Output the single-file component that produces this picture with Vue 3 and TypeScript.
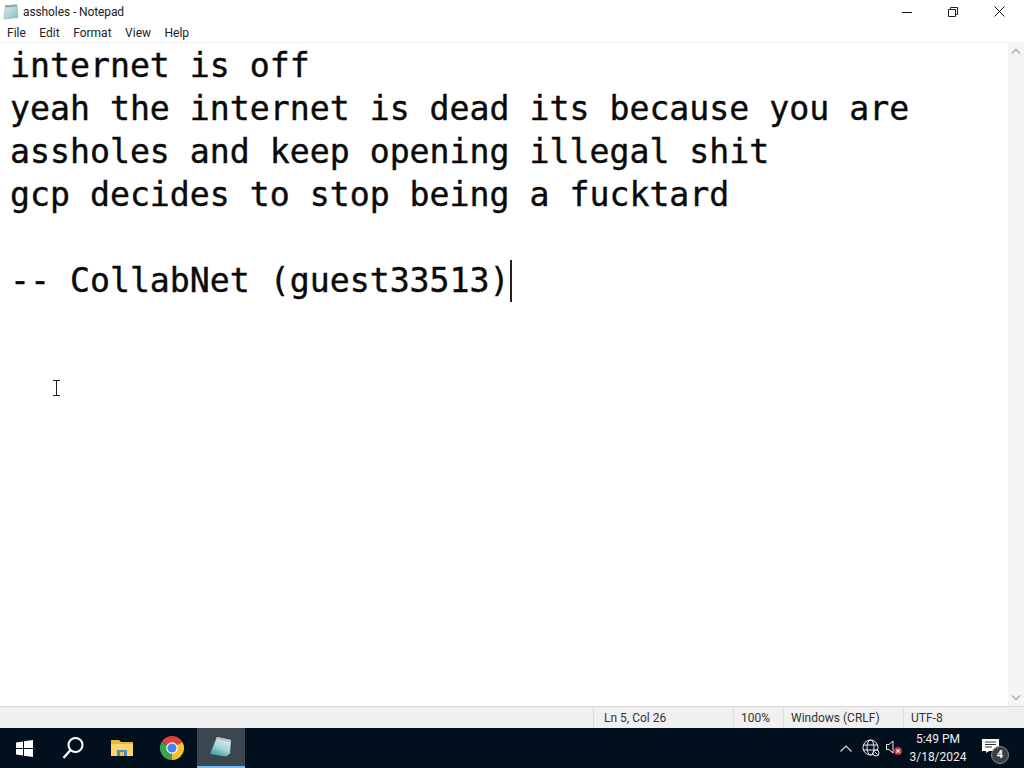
<script setup lang="ts">
const menus = ['File', 'Edit', 'Format', 'View', 'Help'];
const lines = [
  'internet is off',
  'yeah the internet is dead its because you are',
  'assholes and keep opening illegal shit',
  'gcp decides to stop being a fucktard',
  '',
];
const lastLine = '-- CollabNet (guest33513)';
</script>

<template>
  <div class="window">
    <header class="titlebar">
      <svg class="app-icon" width="16" height="16" viewBox="0 0 16 16">
        <defs>
          <linearGradient id="padSmall" x1="0" y1="0" x2="1" y2="1">
            <stop offset="0" stop-color="#d8eeee" />
            <stop offset="1" stop-color="#7fbfc2" />
          </linearGradient>
        </defs>
        <path d="M2.500 3 14 2l1 11.500-14 1.500z" fill="url(#padSmall)" stroke="#8fa8ac" stroke-width=".6" />
        <path d="M3 3V1M5 3V1M7 2.800V.8M9 2.700V.7M11 2.500V.5M13 2.300V.3" stroke="#555" stroke-width="1" />
      </svg>
      <span class="title">assholes - Notepad</span>
      <div class="controls">
        <span class="ctl">
          <svg width="10" height="10" viewBox="0 0 10 10"><path d="M0 5.500h10" stroke="#111" /></svg>
        </span>
        <span class="ctl">
          <svg width="10" height="10" viewBox="0 0 10 10" fill="none" stroke="#222">
            <path d="M.5 2.500h7v7h-7zM2.500 2.500V.5h7v7h-2" />
          </svg>
        </span>
        <span class="ctl">
          <svg width="11" height="11" viewBox="0 0 11 11" fill="none" stroke="#111"><path d="M.5.500l10 10M10.500.500l-10 10" /></svg>
        </span>
      </div>
    </header>

    <nav class="menubar">
      <span v-for="m of menus" :key="m">{{ m }}</span>
    </nav>

    <main class="editor">
      <div class="text">
        <div v-for="(line, i) of lines" :key="i" class="line">{{ line }}</div>
        <div class="line">{{ lastLine }}<i class="caret"></i></div>
      </div>
      <div class="scrollbar">
        <svg width="10" height="6" viewBox="0 0 10 6" fill="none" stroke="#b4b4b4" stroke-width="1.600"><path d="M1 5.500l4-4 4 4" /></svg>
        <svg width="10" height="6" viewBox="0 0 10 6" fill="none" stroke="#b4b4b4" stroke-width="1.600"><path d="M1 .5l4 4 4-4" /></svg>
      </div>
      <svg class="ibeam" width="7" height="16" viewBox="0 0 7 16" fill="none" stroke="#222">
        <path d="M0 .5h7M0 15.500h7M3.500 .5v15" />
      </svg>
    </main>

    <footer class="statusbar">
      <span class="cell pos">Ln 5, Col 26</span>
      <span class="cell zoom">100%</span>
      <span class="cell eol">Windows (CRLF)</span>
      <span class="cell enc">UTF-8</span>
    </footer>

    <div class="taskbar">
      <div class="task start">
        <svg width="17" height="17" viewBox="0 0 17 17" fill="#fff">
          <path d="M0 2.500 7 1.500v6.500H0zM8 1.300 17 0v8H8zM0 9h7v6.500L0 14.500zM8 9h9v8l-9-1.300z" />
        </svg>
      </div>
      <div class="task search">
        <svg width="24" height="24" viewBox="0 0 24 24" fill="none" stroke="#fff" stroke-width="2">
          <circle cx="14.500" cy="9" r="7" />
          <path d="M9.500 14 2.500 22" stroke-width="2.400" />
        </svg>
      </div>
      <div class="task wide">
        <svg width="22" height="18" viewBox="0 0 22 18">
          <path d="M0 1h8l2 2h12v14H0z" fill="#e9b53a" />
          <path d="M0 5h22v12H0z" fill="#fbd56b" />
          <path d="M6 11h10v6H6z" fill="#4a8fb8" />
          <path d="M9 13h4v4H9z" fill="#f0c24c" />
        </svg>
      </div>
      <div class="task wide">
        <svg width="24" height="24" viewBox="0 0 24 24">
          <path d="M12 12 1.600 6A12 12 0 0 1 22.400 6z" fill="#db4437" />
          <path d="M12 12 1.600 6A12 12 0 0 0 12 24z" fill="#3da34f" />
          <path d="M12 12 22.400 6A12 12 0 0 1 12 24z" fill="#f6c026" />
          <circle cx="12" cy="12" r="5.800" fill="#fff" />
          <circle cx="12" cy="12" r="4.600" fill="#4285f4" />
        </svg>
      </div>
      <div class="task active">
        <svg width="24" height="22" viewBox="0 0 24 22">
          <defs>
            <linearGradient id="padLarge" x1="0.700" y1="0" x2="0.200" y2="1">
              <stop offset="0" stop-color="#e6f2f3" />
              <stop offset=".5" stop-color="#a8d4d6" />
              <stop offset="1" stop-color="#2f9a9e" />
            </linearGradient>
          </defs>
          <path d="M8 1 22 4l-1 13.500-4 3L1 18z" fill="url(#padLarge)" />
          <path d="M8 1 22 4l-.4 2.500L6.800 3.300z" fill="#b9c2c5" />
        </svg>
      </div>

      <div class="tray">
        <svg width="12" height="7" viewBox="0 0 12 7" fill="none" stroke="#ddd" stroke-width="1.100"><path d="M.5 6.500 6 1l5.500 5.500" /></svg>
        <svg class="globe" width="18" height="18" viewBox="0 0 18 18" fill="none" stroke="#eee">
          <circle cx="8.500" cy="8.500" r="7.500" />
          <ellipse cx="8.500" cy="8.500" rx="3.500" ry="7.500" />
          <path d="M1 6h15M1 11h15" />
          <circle cx="14" cy="14" r="3" fill="#020f1c" />
          <path d="M12.500 12.500l3 3" />
        </svg>
        <svg class="speaker" width="16" height="16" viewBox="0 0 16 16">
          <path d="M.5 4.500h2.500L7 1v12L3 9.500H.5z" fill="none" stroke="#eee" />
          <circle cx="12" cy="11" r="4" fill="#c8303a" />
          <path d="M10.300 9.300l3.400 3.400M13.700 9.300l-3.400 3.400" stroke="#fff" stroke-width="1.100" />
        </svg>
        <div class="clock">
          <span>5:49 PM</span>
          <span>3/18/2024</span>
        </div>
        <div class="notify">
          <svg width="17" height="14" viewBox="0 0 17 14">
            <path d="M0 0h17v12H7l-3 2v-2H0z" fill="#fff" />
            <path d="M3 3h11M3 5.500h11M3 8h7" stroke="#333" />
          </svg>
          <span class="badge">4</span>
        </div>
      </div>
    </div>
  </div>
</template>

<style scoped>
.window {
  width: 1024px;
  height: 768px;
  display: flex;
  flex-direction: column;
  background: #fff;
  font-family: Roboto, 'Open Sans', sans-serif;
  overflow: hidden;
}

.titlebar {
  height: 23px;
  flex: none;
  display: flex;
  align-items: center;
  padding-left: 3px;
  font-size: 12px;
  color: #222;
}

.title {
  letter-spacing: -0.1px;
}

.app-icon {
  margin-right: 4px;
}

.controls {
  margin-left: auto;
  display: flex;
  padding-right: 2px;
}

.ctl {
  width: 46px;
  display: flex;
  align-items: center;
  justify-content: center;
}

.menubar {
  height: 19px;
  flex: none;
  display: flex;
  align-items: center;
  gap: 13.5px;
  padding-left: 7px;
  font-size: 12px;
  color: #222;
  border-bottom: 1px solid #f0f0f0;
}

.editor {
  flex: 1;
  display: flex;
  position: relative;
  min-height: 0;
}

.text {
  flex: 1;
  padding: 1px 0 0 10px;
  font-family: 'DejaVu Sans Mono', monospace;
  font-size: 33.2px;
  line-height: 43px;
  color: #0a0a0a;
  -webkit-text-stroke: 0.4px #0a0a0a;
  white-space: pre;
}

.line {
  height: 43px;
}

.caret {
  display: inline-block;
  width: 2px;
  height: 42px;
  background: #222;
  vertical-align: -10px;
}

.scrollbar {
  width: 16px;
  flex: none;
  display: flex;
  flex-direction: column;
  justify-content: space-between;
  align-items: center;
  padding: 5px 0;
  box-sizing: border-box;
  background: #f5f5f5;
}

.ibeam {
  position: absolute;
  left: 53px;
  top: 337px;
}

.statusbar {
  height: 22px;
  flex: none;
  display: flex;
  background: #f0f0f0;
  border-top: 1px solid #d7d7d7;
  box-sizing: border-box;
  font-size: 12px;
  color: #333;
  padding-left: 593px;
}

.cell {
  display: flex;
  align-items: center;
  box-sizing: border-box;
  padding-left: 7px;
  border-left: 1px solid #dcdcdc;
}

.pos { width: 140px; padding-left: 10px; }
.zoom { width: 50px; }
.eol { width: 120px; }
.enc { width: 115px; }

.taskbar {
  height: 40px;
  flex: none;
  display: flex;
  background: #020f1c;
}

.task {
  width: 48px;
  display: flex;
  align-items: center;
  justify-content: center;
  box-sizing: border-box;
}

.task.search {
  width: 49px;
}

.task.wide {
  width: 50px;
}

.task.active {
  background: #3a4750;
  border-bottom: 2px solid #76b9ed;
}

.tray {
  margin-left: auto;
  display: flex;
  align-items: center;
  color: #eee;
  font-size: 12px;
}

.globe {
  margin-left: 10px;
}

.speaker {
  margin-left: 6px;
}

.clock {
  width: 72px;
  display: flex;
  flex-direction: column;
  align-items: center;
  line-height: 18px;
}

.notify {
  position: relative;
  width: 50px;
  height: 40px;
  display: flex;
  align-items: center;
  padding-left: 8px;
  padding-bottom: 4px;
  box-sizing: border-box;
}

.badge {
  position: absolute;
  left: 17px;
  top: 18px;
  width: 16px;
  height: 16px;
  border-radius: 50%;
  background: #3a3f45;
  border: 1px solid #888;
  color: #fff;
  font-size: 11px;
  font-weight: 700;
  line-height: 16px;
  text-align: center;
}
</style>
